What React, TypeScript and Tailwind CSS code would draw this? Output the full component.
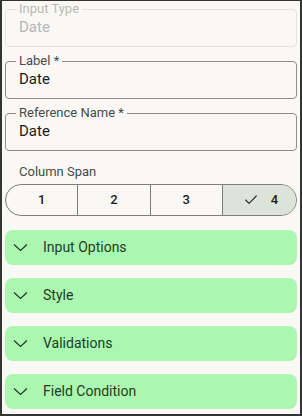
import { Check } from 'lucide-react'

type FieldProps = {
  label: string
  value: string
  disabled?: boolean
}

function OutlinedField({ label, value, disabled }: FieldProps) {
  return (
    <fieldset
      className={
        'h-[46px] rounded-[4px] border px-[10px] pb-[9px] ' +
        (disabled ? 'border-[#e4e3de]' : 'border-[#8e8f8c]')
      }
    >
      <legend
        className={
          'px-[3px] text-[13px] leading-[16px] ' + (disabled ? 'text-[#b9b9b6]' : 'text-[#4a4a48]')
        }
      >
        {label}
      </legend>
      <div
        className={
          'px-[3px] text-[15px] leading-[20px] ' + (disabled ? 'text-[#b6b6b3]' : 'text-[#1c1c1b]')
        }
      >
        {value}
      </div>
    </fieldset>
  )
}

const spans = [1, 2, 3, 4]
const sections = ['Input Options', 'Style', 'Validations', 'Field Condition']

export default function App() {
  const selected = 4

  return (
    <div
      className="flex h-[416px] w-[302px] flex-col border-t border-r-2 border-b-2 border-l-2 border-[#343434] bg-[#f9f8f5] px-[3px] text-[#1c1c1b]"
      style={{ fontFamily: 'Roboto, "Noto Sans", sans-serif' }}
    >
      <div className="flex flex-col gap-[6px]">
        <OutlinedField label="Input Type" value="Date" disabled />
        <OutlinedField label="Label *" value="Date" />
        <OutlinedField label="Reference Name *" value="Date" />
      </div>

      <div className="mt-[13px] px-[14px] text-[13px] leading-[16px] text-[#4a4a48]">Column Span</div>

      {/* segmented column span picker */}
      <div className="mt-[4px] flex h-[32px] overflow-hidden rounded-full border border-[#7d7e7b]">
        {spans.map((n, i) => (
          <div
            key={n}
            className={
              'flex flex-1 items-center justify-center gap-[12px] text-[13px] font-medium ' +
              (i > 0 ? 'border-l border-[#7d7e7b] ' : '') +
              (n === selected ? 'bg-[#dce3d8] pl-[2px]' : '')
            }
          >
            {n === selected && <Check size={16} strokeWidth={1.75} className="text-[#2a2d29]" />}
            <span>{n}</span>
          </div>
        ))}
      </div>

      <div className="mt-[14px] flex flex-col gap-[13px]">
        {sections.map((s) => (
          <div
            key={s}
            className="flex h-[35px] items-center gap-[15px] rounded-[8px] bg-[#abf7b1] pl-[8px] text-[14px] text-[#1e3c21]"
          >
            <svg width="15" height="9" viewBox="0 0 15 9" fill="none" stroke="currentColor" strokeWidth="1.25">
              <polyline points="1,1.5 7.5,7.5 14,1.5" />
            </svg>
            <span>{s}</span>
          </div>
        ))}
      </div>
    </div>
  )
}
